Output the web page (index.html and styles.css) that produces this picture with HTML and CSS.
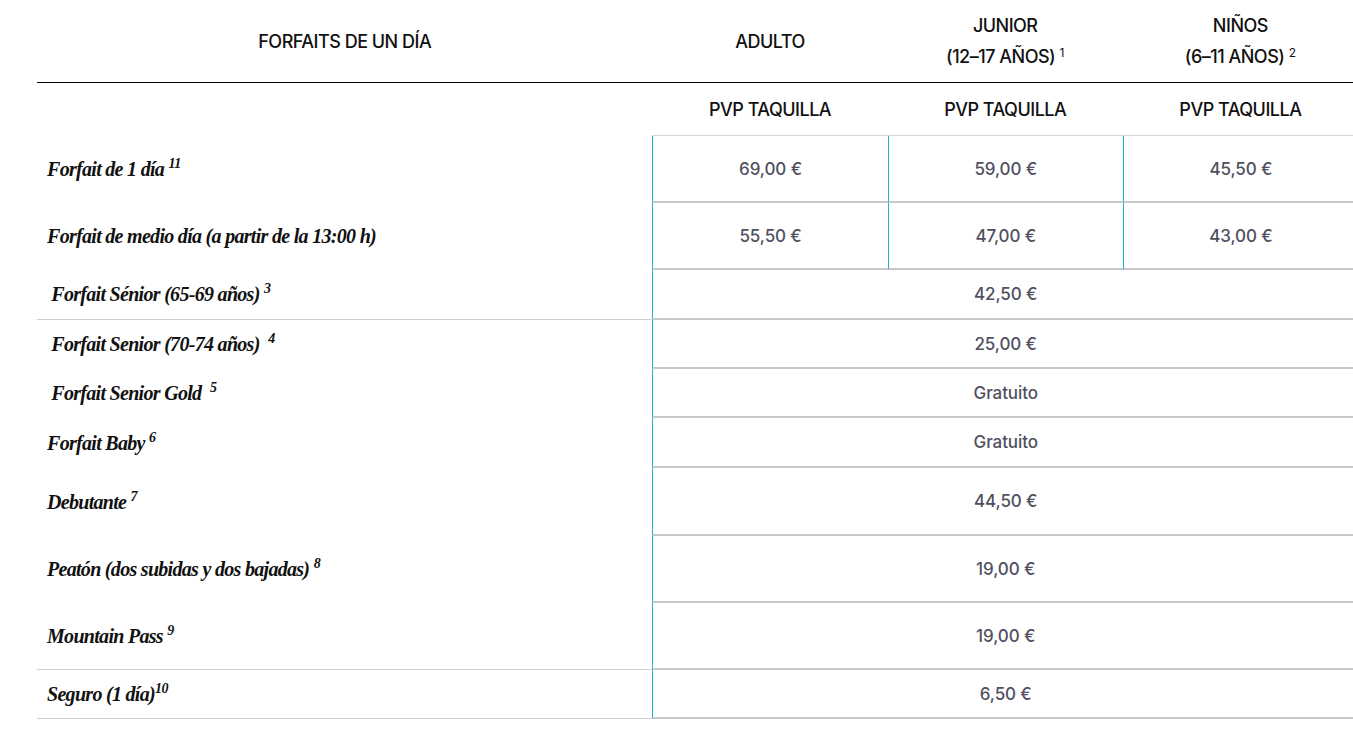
FILE: index.html
```html
<!DOCTYPE html>
<html lang="es">
<head>
<meta charset="utf-8">
<title>Forfaits de un día</title>
<link rel="stylesheet" href="styles.css">
</head>
<body>
<div class="wrap">
  <table class="prices">
    <colgroup>
      <col class="c-name">
      <col class="c-price">
      <col class="c-price">
      <col class="c-price">
    </colgroup>
    <thead>
      <tr>
        <th>FORFAITS DE UN DÍA</th>
        <th>ADULTO</th>
        <th>JUNIOR<br>(12–17 AÑOS) <sup>1</sup></th>
        <th>NIÑOS<br>(6–11 AÑOS) <sup>2</sup></th>
      </tr>
    </thead>
    <tbody>
      <tr class="sub">
        <td class="blank"></td>
        <td>PVP TAQUILLA</td>
        <td>PVP TAQUILLA</td>
        <td>PVP TAQUILLA</td>
      </tr>
      <tr class="tall">
        <td class="label">Forfait de 1 día <sup>11</sup></td>
        <td class="val">69,00 €</td>
        <td class="val">59,00 €</td>
        <td class="val">45,50 €</td>
      </tr>
      <tr class="tall">
        <td class="label">Forfait de medio día (a partir de la 13:00 h)</td>
        <td class="val">55,50 €</td>
        <td class="val">47,00 €</td>
        <td class="val">43,00 €</td>
      </tr>
      <tr class="short plus">
        <td class="label ruled">&nbsp;Forfait Sénior (65-69 años) <sup>3</sup></td>
        <td class="val" colspan="3">42,50 €</td>
      </tr>
      <tr class="short">
        <td class="label">&nbsp;Forfait Senior (70-74 años) &nbsp;<sup>4</sup></td>
        <td class="val" colspan="3">25,00 €</td>
      </tr>
      <tr class="short">
        <td class="label">&nbsp;Forfait Senior Gold &nbsp;<sup>5</sup></td>
        <td class="val" colspan="3">Gratuito</td>
      </tr>
      <tr class="short plus">
        <td class="label">Forfait Baby <sup>6</sup></td>
        <td class="val" colspan="3">Gratuito</td>
      </tr>
      <tr class="tall plus">
        <td class="label">Debutante <sup>7</sup></td>
        <td class="val" colspan="3">44,50 €</td>
      </tr>
      <tr class="tall">
        <td class="label">Peatón (dos subidas y dos bajadas) <sup>8</sup></td>
        <td class="val" colspan="3">19,00 €</td>
      </tr>
      <tr class="tall">
        <td class="label ruled">Mountain Pass <sup>9</sup></td>
        <td class="val" colspan="3">19,00 €</td>
      </tr>
      <tr class="short">
        <td class="label ruled">Seguro (1 día)<sup>10</sup></td>
        <td class="val" colspan="3">6,50 €</td>
      </tr>
    </tbody>
  </table>
</div>
</body>
</html>
```

FILE: styles.css
```css
html, body {
  margin: 0;
  padding: 0;
  background: #ffffff;
  overflow: hidden;
}

.wrap {
  padding-left: 37px;
  width: 1321px;
}

.prices {
  width: 1321px;
  table-layout: fixed;
  border-collapse: separate;
  border-spacing: 0;
  font-family: Inter, "Liberation Sans", sans-serif;
}

.c-name { width: 615px; }
.c-price { width: 235px; }

.prices th {
  height: 62px;
  padding: 10px 0;
  font-size: 18px;
  font-weight: 500;
  line-height: 31px;
  color: #111111;
  text-align: center;
  vertical-align: middle;
  border-bottom: 1px solid #000000;
  letter-spacing: -0.5px;
}

.prices th sup {
  font-size: 12px;
  font-weight: 400;
  vertical-align: 6px;
  line-height: 0;
  letter-spacing: 0;
}

.sub td {
  height: 52px;
  padding: 0;
  font-size: 18px;
  font-weight: 500;
  color: #111111;
  text-align: center;
  vertical-align: middle;
  border-bottom: 1px solid #d6d6d6;
  letter-spacing: -0.5px;
}

.sub td.blank {
  border-bottom: none;
}

.tall td { height: 65px; padding: 0; }
.short td { height: 47px; padding: 0; }
.tall.plus td { height: 66px; }
.short.plus td { height: 48px; }

.label {
  padding-left: 10px !important;
  font-family: "Liberation Serif", "Times New Roman", serif;
  font-style: italic;
  font-weight: 700;
  font-size: 20px;
  letter-spacing: -0.7px;
  color: #111111;
  vertical-align: middle;
  white-space: nowrap;
}

.label sup {
  font-size: 14px;
  vertical-align: 8px;
  line-height: 0;
  letter-spacing: -0.4px;
}

.label.ruled {
  border-bottom: 1px solid #cfcfcf;
}

.val {
  border-left: 1px solid #1ab4d7;
  border-bottom: 2px solid #c8c8c8;
  text-align: center;
  vertical-align: middle;
  font-size: 17px;
  font-weight: 500;
  color: #50505f;
  letter-spacing: -0.1px;
}
```
